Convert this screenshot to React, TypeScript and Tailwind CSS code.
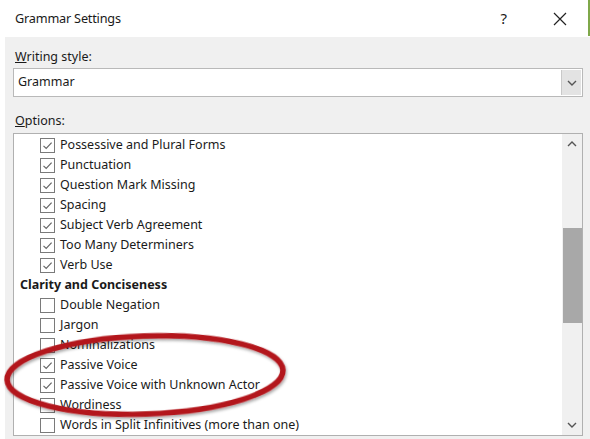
import React from 'react';

type Row = { label: string; checked?: boolean; header?: boolean };

const rows: Row[] = [
  { label: 'Possessive and Plural Forms', checked: true },
  { label: 'Punctuation', checked: true },
  { label: 'Question Mark Missing', checked: true },
  { label: 'Spacing', checked: true },
  { label: 'Subject Verb Agreement', checked: true },
  { label: 'Too Many Determiners', checked: true },
  { label: 'Verb Use', checked: true },
  { label: 'Clarity and Conciseness', header: true },
  { label: 'Double Negation' },
  { label: 'Jargon' },
  { label: 'Nominalizations' },
  { label: 'Passive Voice', checked: true },
  { label: 'Passive Voice with Unknown Actor', checked: true },
  { label: 'Wordiness' },
  { label: 'Words in Split Infinitives (more than one)' },
];

const Checkbox = ({ checked }: { checked?: boolean }) => (
  <div className="w-[15px] h-[15px] border border-[#7a7a7a] bg-white flex items-center justify-center shrink-0">
    {checked && (
      <svg width="11" height="11" viewBox="0 0 11 11">
        <path d="M1.5 5.8 L4.2 8.5 L9.6 2.6" fill="none" stroke="#666" strokeWidth="1.2" />
      </svg>
    )}
  </div>
);

const Chevron = ({ up }: { up?: boolean }) => (
  <svg width="10" height="6" viewBox="0 0 10 6">
    <path d={up ? 'M1 5 L5 1 L9 5' : 'M1 1 L5 5 L9 1'} fill="none" stroke="#555" strokeWidth="1.4" />
  </svg>
);

export default function App() {
  return (
    <div
      className="w-[590px] h-[439px] bg-white flex flex-col text-[#1a1a1a] overflow-hidden relative"
      style={{ fontFamily: '"Noto Sans", "Open Sans", sans-serif' }}
    >
      {/* title bar */}
      <div className="h-[37px] flex items-center pl-[15px] shrink-0 relative">
        <span className="text-[12.7px] tracking-[-0.2px]">Grammar Settings</span>
        <span className="ml-auto text-[15px] mr-[46px]">?</span>
        <svg width="14" height="14" viewBox="0 0 14 14" className="mr-[23px]">
          <path d="M1 1 L13 13 M13 1 L1 13" stroke="#222" strokeWidth="1.2" />
        </svg>
        <div className="absolute right-0 top-0 w-[2px] h-[36px] bg-[#7fa84a]" />
      </div>

      {/* body */}
      <div className="flex-1 ml-[5px] bg-[#f0f0f0] pl-[8px] pr-[7px] flex flex-col">
        <div className="mt-[11px] h-[18px] text-[12.5px] pl-[2px] leading-[18px]">
          <span className="underline">W</span>riting style:
        </div>
        <div className="mt-[2px] h-[29px] border border-[#b9b9b9] bg-white flex items-center">
          <span className="pl-[4px] text-[12.5px]">Grammar</span>
          <div className="ml-auto mr-[1px] w-[20px] h-[25px] bg-[#e3e3e3] border-l border-[#c9c9c9] flex items-center justify-center">
            <Chevron />
          </div>
        </div>
        <div className="mt-[15px] h-[18px] text-[12.5px] pl-[2px] leading-[18px]">
          <span className="underline">O</span>ptions:
        </div>
        <div className="mt-[3px] h-[303px] border border-[#b0b0b0] bg-white flex">
          <div className="flex-1 pt-[1px] overflow-hidden">
            {rows.map((r) =>
              r.header ? (
                <div key={r.label} className="h-[20px] flex items-center pl-[6px] text-[12.5px] font-bold">
                  {r.label}
                </div>
              ) : (
                <div key={r.label} className="h-[20px] flex items-center pl-[26px] gap-[5px] text-[12.5px] whitespace-nowrap">
                  <Checkbox checked={r.checked} />
                  <span>{r.label}</span>
                </div>
              )
            )}
          </div>
          <div className="w-[20px] bg-[#f0f0f0] flex flex-col items-center">
            <div className="h-[20px] flex items-center justify-center">
              <Chevron up />
            </div>
            <div className="mt-[74px] w-[19px] h-[95px] bg-[#a8a8a8]" />
            <div className="mt-auto h-[20px] flex items-center justify-center">
              <Chevron />
            </div>
          </div>
        </div>
      </div>

      {/* red annotation ellipse */}
      <svg className="absolute left-0 top-[327px] pointer-events-none" width="300" height="100" viewBox="0 0 300 100">
        <defs>
          <filter id="sh" x="-10%" y="-20%" width="120%" height="140%">
            <feDropShadow dx="1" dy="2" stdDeviation="1.5" floodColor="#000" floodOpacity="0.35" />
          </filter>
        </defs>
        <ellipse cx="145" cy="48" rx="138" ry="39" fill="none" stroke="#b3171c" strokeWidth="5.5" transform="rotate(-2 145 48)" filter="url(#sh)" />
      </svg>
    </div>
  );
}
